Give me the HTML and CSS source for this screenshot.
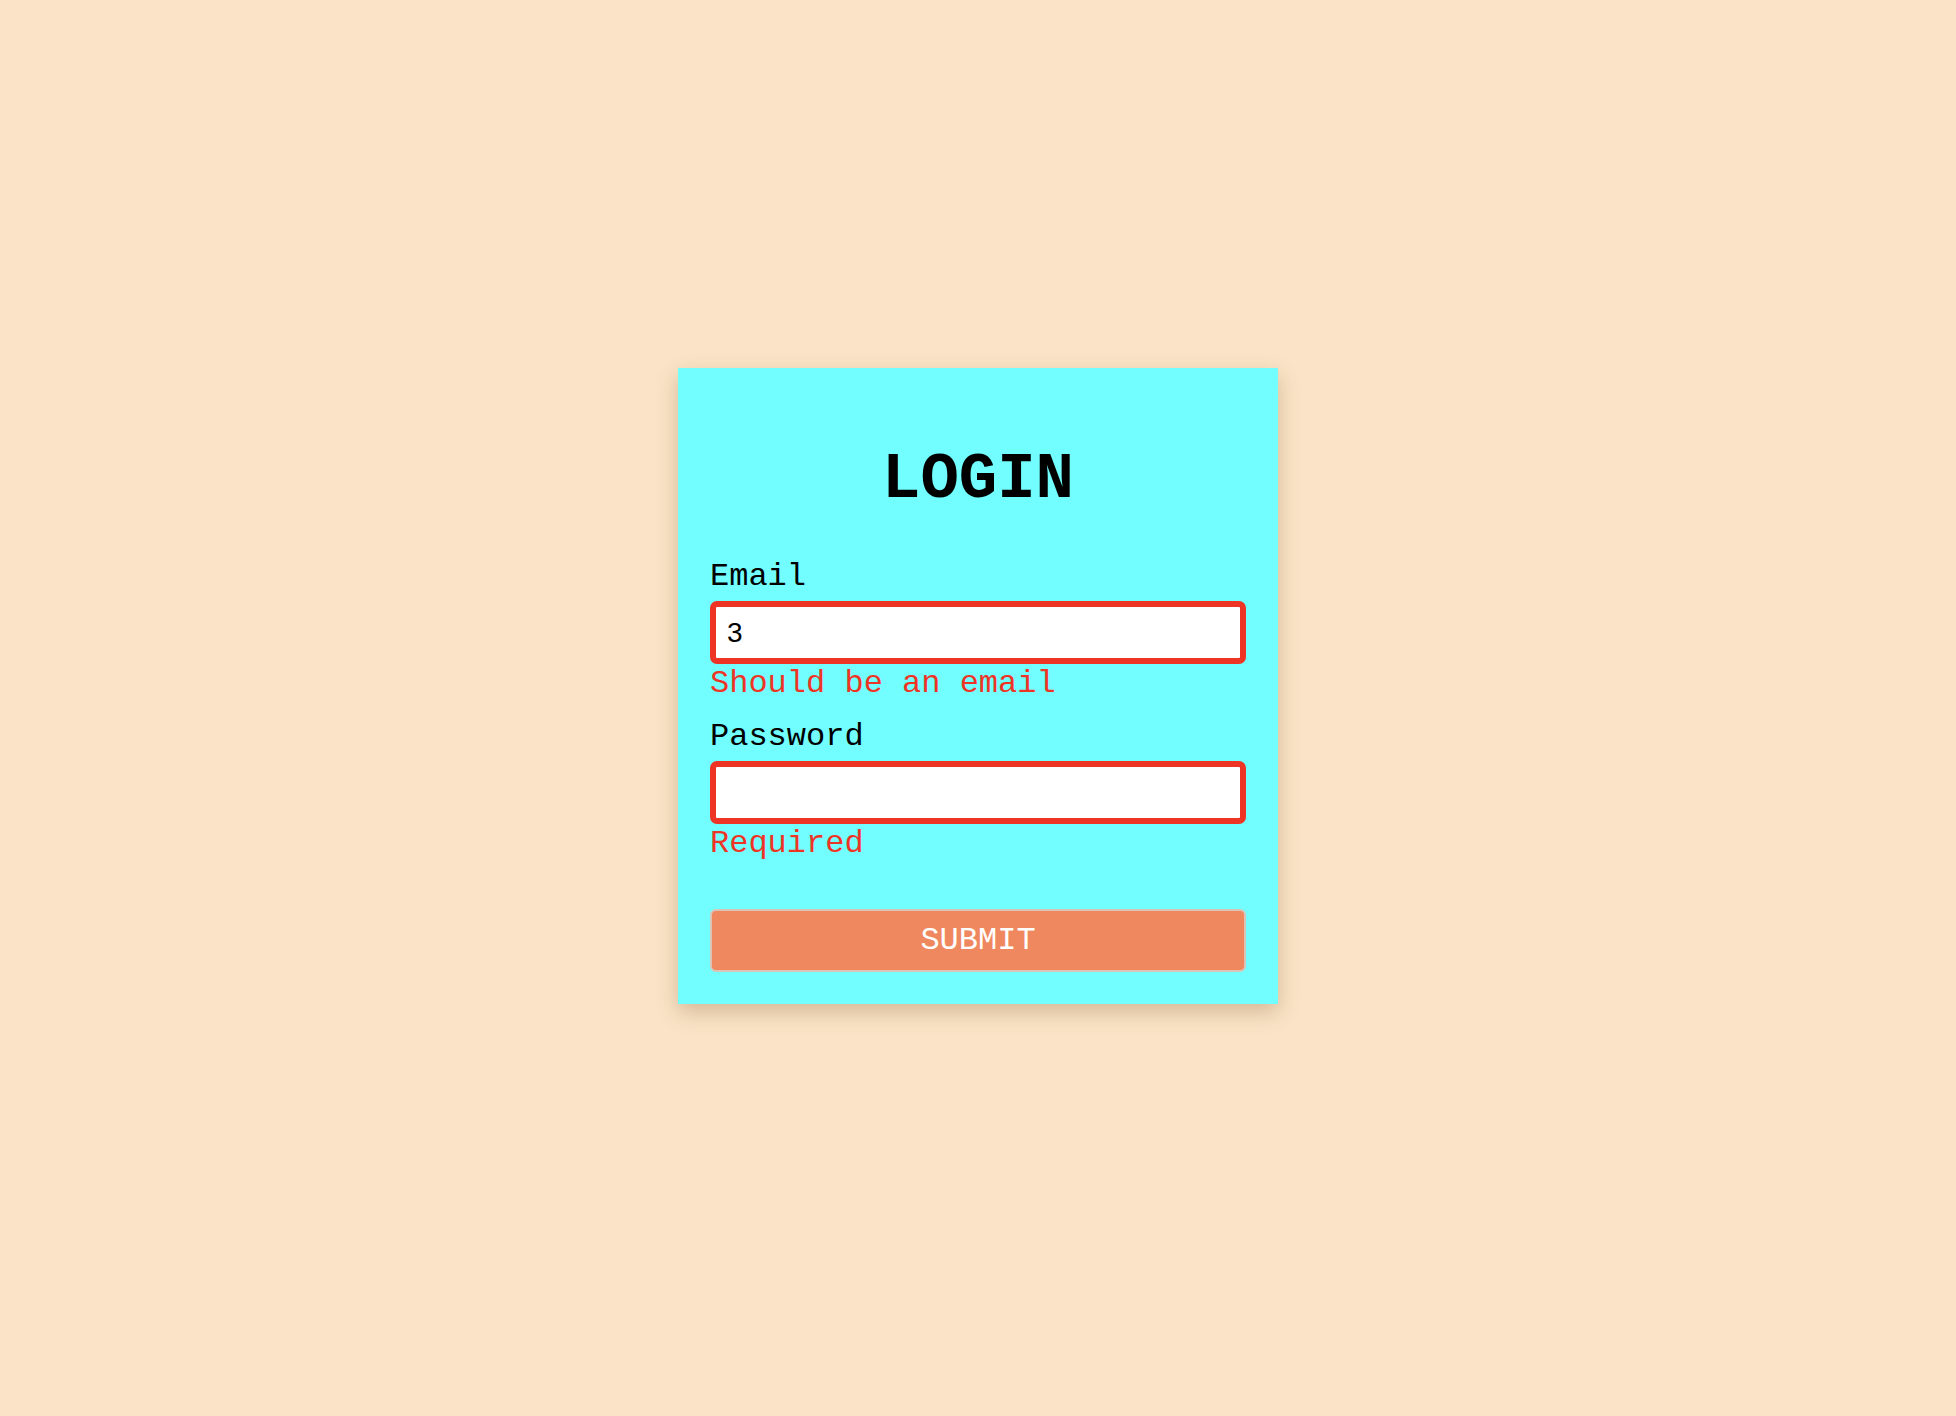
FILE: index.html
```html
<!DOCTYPE html>
<html lang="en">
<head>
<meta charset="utf-8">
<title>Login</title>
<link rel="stylesheet" href="styles.css">
</head>
<body>
<main class="page">
  <form class="card" novalidate>
    <h1 class="title">LOGIN</h1>
    <div class="field">
      <label class="label" for="email">Email</label>
      <input class="input input-error" id="email" type="text" value="3">
      <div class="error">Should be an email</div>
    </div>
    <div class="field">
      <label class="label" for="password">Password</label>
      <input class="input input-error" id="password" type="password" value="">
      <div class="error">Required</div>
    </div>
    <button class="submit" type="button">SUBMIT</button>
  </form>
</main>
</body>
</html>
```

FILE: styles.css
```css
* {
  box-sizing: border-box;
}

html, body {
  margin: 0;
  padding: 0;
}

body {
  background: #fae3c7;
  font-family: "Courier New", "Nimbus Mono PS", "Nimbus Mono L", FreeMono, "Liberation Mono", monospace;
  color: #000;
}

.page {
  min-height: 1416px;
  display: flex;
  justify-content: center;
  align-items: flex-start;
  padding-top: 368px;
}

.card {
  width: 600px;
  padding: 32px;
  background: #72fefe;
  box-shadow: 0 8px 20px rgba(120, 80, 30, 0.28);
  display: flex;
  flex-direction: column;
}

.title {
  margin: 44px 0 43px;
  font-size: 64px;
  line-height: 72px;
  font-weight: bold;
  text-align: center;
}

.field {
  display: flex;
  flex-direction: column;
}

.field + .field {
  margin-top: 17px;
}

.label {
  font-size: 32px;
  line-height: 36px;
}

.input {
  margin-top: 6px;
  height: 63px;
  width: 100%;
  border: 6px solid #b0b0b0;
  border-radius: 7px;
  background: #fff;
  padding: 0 11px;
  font-family: "Liberation Sans", Arial, sans-serif;
  font-size: 28px;
  color: #000;
  outline: none;
}

.input-error {
  border-color: #ee3425;
}

.error {
  margin-top: 2px;
  font-size: 32px;
  line-height: 36px;
  color: #ee3425;
}

.submit {
  margin-top: 47px;
  height: 63px;
  width: 100%;
  background: #ef885e;
  border: 2px solid #dcc3b8;
  border-radius: 6px;
  color: #fff;
  font-family: inherit;
  font-size: 32px;
  cursor: pointer;
}
```
